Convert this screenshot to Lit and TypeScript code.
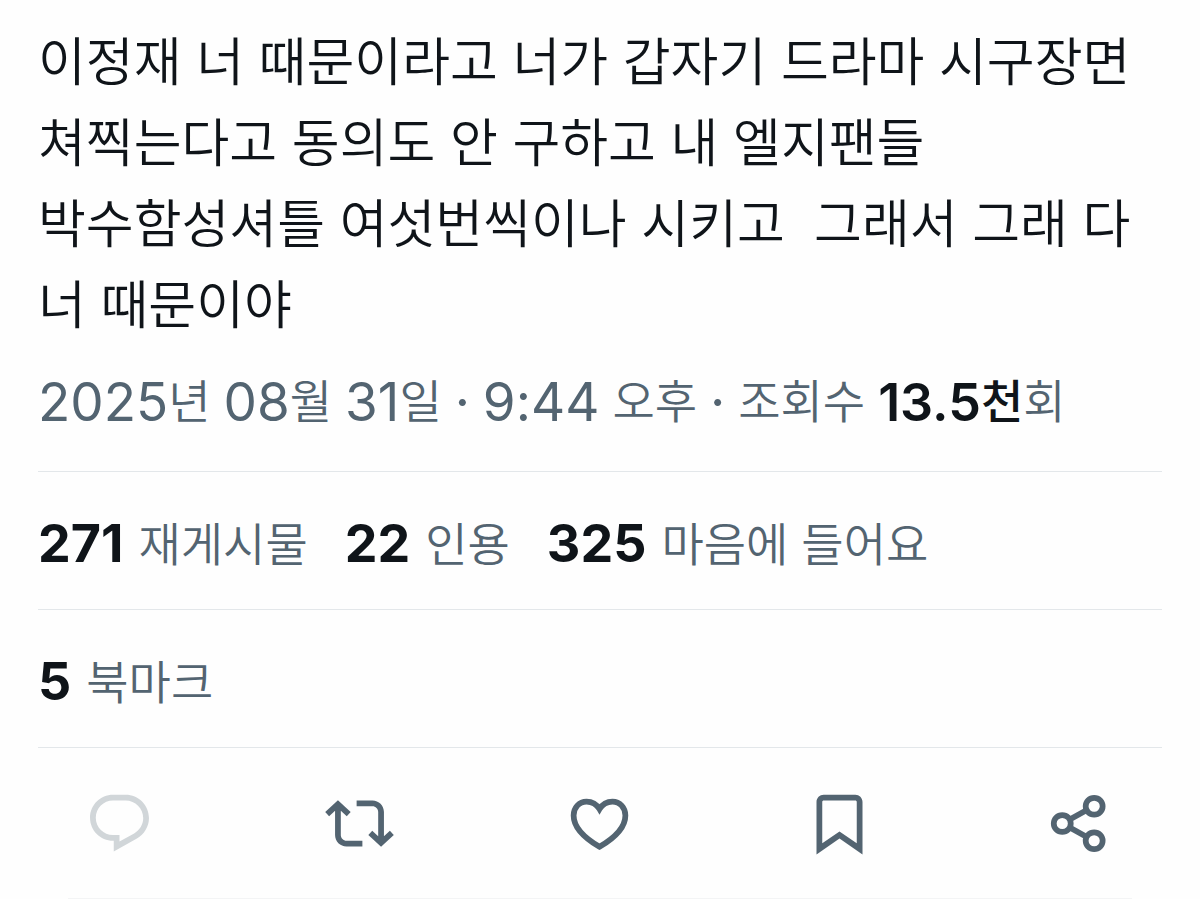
import { LitElement, html, css, svg } from "lit";
import { customElement } from "lit/decorators.js";

const heart = svg`<path d="M12 7C10.9 5.2 9.2 4.4 7.5 4.4C4.9 4.4 3 6.5 3 9.2C3 13.6 7.4 17.4 12 20.1C16.6 17.4 21 13.6 21 9.2C21 6.5 19.1 4.4 16.5 4.4C14.8 4.4 13.1 5.2 12 7Z" fill="none" stroke="currentColor" stroke-width="2"/>`;
const reply = svg`<path d="M1.751 10c0-4.42 3.584-8 8.005-8h4.366c4.49 0 8.129 3.64 8.129 8.13 0 2.96-1.607 5.68-4.196 7.11l-8.054 4.46v-3.69h-.067c-4.49.1-8.183-3.51-8.183-8.01zm8.005-6c-3.317 0-6.005 2.69-6.005 6 0 3.37 2.77 6.08 6.138 6.01l.351-.01h1.761v2.3l5.087-2.81c1.951-1.08 3.163-3.13 3.163-5.36 0-3.39-2.744-6.13-6.129-6.13H9.756z"/>`;
const repost = svg`<path d="M4.5 3.88l4.432 4.14-1.364 1.46L5.5 7.55V16c0 1.1.896 2 2 2H13v2H7.5c-2.209 0-4-1.79-4-4V7.55L1.432 9.48.068 8.02 4.5 3.88zM16.5 6H11V4h5.5c2.209 0 4 1.79 4 4v8.45l2.068-1.93 1.364 1.46-4.432 4.14-4.432-4.14 1.364-1.46 2.068 1.93V8c0-1.1-.896-2-2-2z"/>`;
const bookmark = svg`<path d="M4 4.5C4 3.12 5.119 2 6.5 2h11C18.881 2 20 3.12 20 4.5v18.24l-8-5.51-8 5.51V4.5zM6.5 4c-.276 0-.5.22-.5.5v14.4l6-4.13 6 4.13V4.5c0-.28-.224-.5-.5-.5h-11z"/>`;
const share = svg`<g fill="none" stroke="currentColor" stroke-width="2"><circle cx="6" cy="12" r="2.95"/><circle cx="17.1" cy="6" r="2.95"/><circle cx="17.1" cy="18" r="2.95"/><path d="M8.6 10.6L14.4 7.4M8.6 13.4L14.4 16.6"/></g>`;

const actions = [
  { label: "답글", icon: reply, muted: true },
  { label: "재게시", icon: repost, muted: false },
  { label: "마음에 들어요", icon: heart, muted: false },
  { label: "북마크", icon: bookmark, muted: false },
  { label: "공유", icon: share, muted: false },
];

@customElement("app-root")
export class AppRoot extends LitElement {
  static styles = css`
    :host {
      display: block;
      min-height: 100vh;
      box-sizing: border-box;
      background: #fefefe;
      color: #0f1419;
      font-family: Inter, "Noto Sans CJK KR", sans-serif;
      font-weight: 350;
    }
    .content {
      padding: 22px 38px 0;
    }
    .text {
      margin: 0;
      font-size: 52px;
      line-height: 81px;
      white-space: pre-wrap;
      word-break: keep-all;
    }
    .meta,
    .stats {
      font-size: 46px;
      color: #536471;
    }
    .meta {
      line-height: 80px;
      padding: 15px 0 28px;
    }
    .num {
      font-size: 52px;
      font-weight: 400;
    }
    .meta .num {
      font-size: 53px;
      vertical-align: -3px;
    }
    .strong {
      color: #0f1419;
      font-weight: 700;
    }
    .meta .num.strong {
      font-size: 52px;
      font-weight: 600;
    }
    .unit {
      color: #0f1419;
      font-weight: 500;
    }
    .stats {
      display: flex;
      flex-wrap: wrap;
      column-gap: 37px;
      border-top: 1px solid #e3e7ea;
      line-height: 80px;
      padding: 32px 0 25px;
    }
    .stat {
      display: flex;
      align-items: center;
      column-gap: 15px;
      color: inherit;
      text-decoration: none;
    }
    .rule {
      height: 1px;
      background: #e3e7ea;
    }
    .actions {
      display: grid;
      grid-template-columns: repeat(5, 1fr);
      justify-items: center;
      padding: 41px 1px 40px 0;
    }
    .action {
      display: block;
      border: 0;
      padding: 0;
      background: none;
      color: #536471;
      cursor: pointer;
    }
    .action svg {
      display: block;
      width: 69px;
      height: 69px;
      fill: currentColor;
    }
    .muted {
      color: #d1d6d9;
    }
    .end {
      height: 1px;
      margin: 0 68px;
      background: #f3f4f5;
    }
  `;

  private stat(value: string, label: string) {
    return html`<a class="stat" href="#"><span class="num strong">${value}</span><span>${label}</span></a>`;
  }

  render() {
    return html`
      <article>
        <div class="content">
          <p class="text">이정재 너 때문이라고 너가 갑자기 드라마 시구장면 쳐찍는다고 동의도 안 구하고 내 엘지팬들 박수함성셔틀 여섯번씩이나 시키고  그래서 그래 다 너 때문이야</p>
          <div class="meta"><span class="num">2025</span>년 <span class="num">08</span>월 <span class="num">31</span>일 <span class="num">·</span> <span class="num">9:44</span> 오후 <span class="num">·</span> 조회수 <span class="num strong">13.5</span><span class="unit">천</span>회</div>
          <div class="stats">
            ${this.stat("271", "재게시물")}${this.stat("22", "인용")}${this.stat("325", "마음에 들어요")}
          </div>
          <div class="stats">${this.stat("5", "북마크")}</div>
          <div class="rule"></div>
        </div>
        <div class="actions">
          ${actions.map(
            (a) => html`<button class="action ${a.muted ? "muted" : ""}" type="button" aria-label=${a.label} ?disabled=${a.muted}>
              <svg viewBox="0 0 24 24" aria-hidden="true">${a.icon}</svg>
            </button>`
          )}
        </div>
        <div class="end"></div>
      </article>
    `;
  }
}
